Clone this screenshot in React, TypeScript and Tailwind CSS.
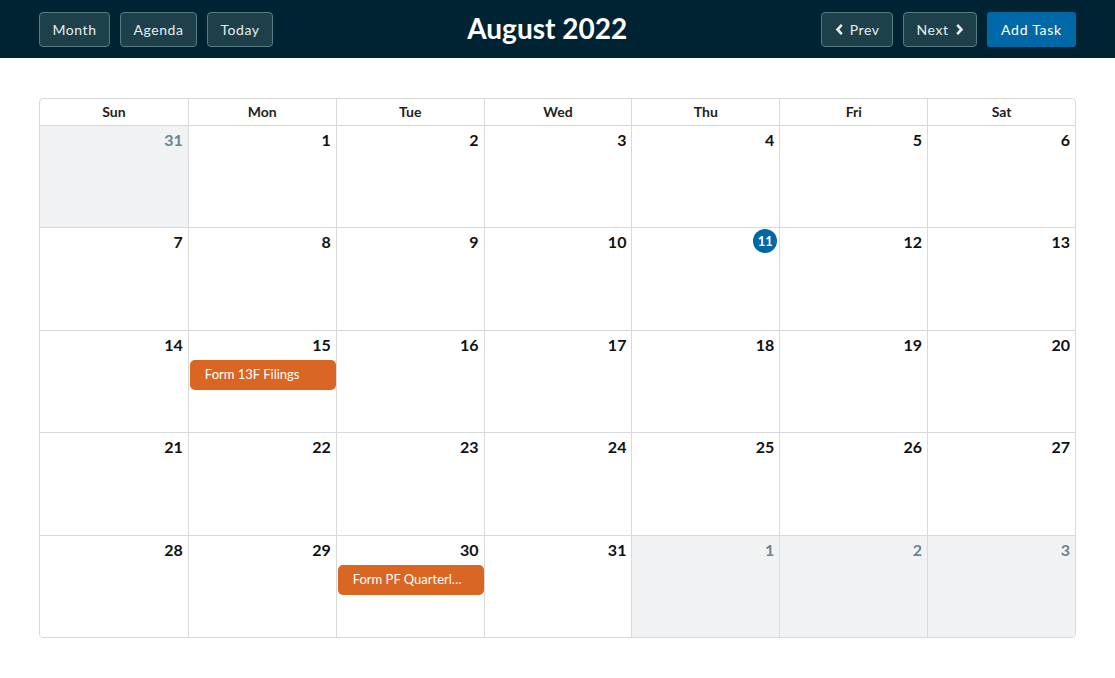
import React from "react";

type Cell = { d: number; off?: boolean; today?: boolean; event?: string };

const weeks: Cell[][] = [
  [{ d: 31, off: true }, { d: 1 }, { d: 2 }, { d: 3 }, { d: 4 }, { d: 5 }, { d: 6 }],
  [{ d: 7 }, { d: 8 }, { d: 9 }, { d: 10 }, { d: 11, today: true }, { d: 12 }, { d: 13 }],
  [{ d: 14 }, { d: 15, event: "Form 13F Filings" }, { d: 16 }, { d: 17 }, { d: 18 }, { d: 19 }, { d: 20 }],
  [{ d: 21 }, { d: 22 }, { d: 23 }, { d: 24 }, { d: 25 }, { d: 26 }, { d: 27 }],
  [{ d: 28 }, { d: 29 }, { d: 30, event: "Form PF Quarterly Filing" }, { d: 31 }, { d: 1, off: true }, { d: 2, off: true }, { d: 3, off: true }],
];

const days = ["Sun", "Mon", "Tue", "Wed", "Thu", "Fri", "Sat"];

function Btn({ children }: { children: React.ReactNode }) {
  return (
    <button className="h-[35px] px-[12.5px] rounded-[4px] border border-[#587a82] bg-[#1d404b] text-[#e6eef0] text-[14px] tracking-[0.55px] flex items-center gap-[6px]">
      {children}
    </button>
  );
}

export default function App() {
  return (
    <div className="w-[1115px] h-[678px] bg-white" style={{ fontFamily: "Lato, 'Open Sans', sans-serif" }}>
      <div className="h-[58px] bg-[#002333] flex items-center px-[39px]">
        <div className="flex gap-[10px]">
          <Btn>Month</Btn>
          <Btn>Agenda</Btn>
          <Btn>Today</Btn>
        </div>
        <div className="flex-1 flex items-center justify-center pb-[2px]">
          <span className="text-white text-[28px] font-bold">August 2022</span>
        </div>
        <div className="flex gap-[10px]">
          <Btn>
            <svg width="9" height="13" viewBox="0 0 9 13"><path d="M6.8 1.8 L2.5 6.5 L6.8 11.2" stroke="#e6eef0" strokeWidth="2.6" fill="none" /></svg>
            Prev
          </Btn>
          <Btn>
            Next
            <svg width="9" height="13" viewBox="0 0 9 13"><path d="M2.2 1.8 L6.5 6.5 L2.2 11.2" stroke="#e6eef0" strokeWidth="2.6" fill="none" /></svg>
          </Btn>
          <button className="h-[35px] px-[14px] rounded-[3px] bg-[#0068a6] text-white text-[14px] tracking-[0.75px]">Add Task</button>
        </div>
      </div>
      <div className="px-[39px] pt-[40px]">
        <div className="h-[540px] border border-[#d9d9d9] rounded-[4px] overflow-hidden flex flex-col">
          <div className="grid grid-cols-7 h-[27px] border-b border-[#d9d9d9]">
            {days.map((d, i) => (
              <div key={d} className={`flex items-center justify-center pb-[2px] text-[14px] font-bold text-[#222] ${i > 0 ? "border-l border-[#d9d9d9]" : ""}`}>{d}</div>
            ))}
          </div>
          <div className="flex-1 flex flex-col">
            {weeks.map((w, wi) => (
              <div key={wi} className={`flex-1 grid grid-cols-7 ${wi > 0 ? "border-t border-[#d9d9d9]" : ""}`}>
                {w.map((c, ci) => (
                  <div key={ci} className={`flex flex-col min-w-0 ${ci > 0 ? "border-l border-[#d9d9d9]" : ""} ${c.off ? "bg-[#f1f2f4]" : "bg-white"}`}>
                    <div className="h-[29px] flex justify-end items-start">
                      {c.today ? (
                        <span className="mt-[1px] mr-[2px] w-[24px] h-[24px] rounded-full bg-[#0068a6] text-white text-[13px] font-bold flex items-center justify-center">{c.d}</span>
                      ) : (
                        <span className={`pt-[4px] pr-[5px] text-[16px] font-bold leading-[20px] ${c.off ? "text-[#6b858d]" : "text-[#111]"}`}>{c.d}</span>
                      )}
                    </div>
                    {c.event && (
                      <div className="ml-[1px] h-[30px] rounded-[5px] bg-[#d96623] text-white text-[13px] flex items-center pl-[15px] pr-[20px] overflow-hidden">
                        <span className="truncate">{c.event}</span>
                      </div>
                    )}
                  </div>
                ))}
              </div>
            ))}
          </div>
        </div>
      </div>
    </div>
  );
}
